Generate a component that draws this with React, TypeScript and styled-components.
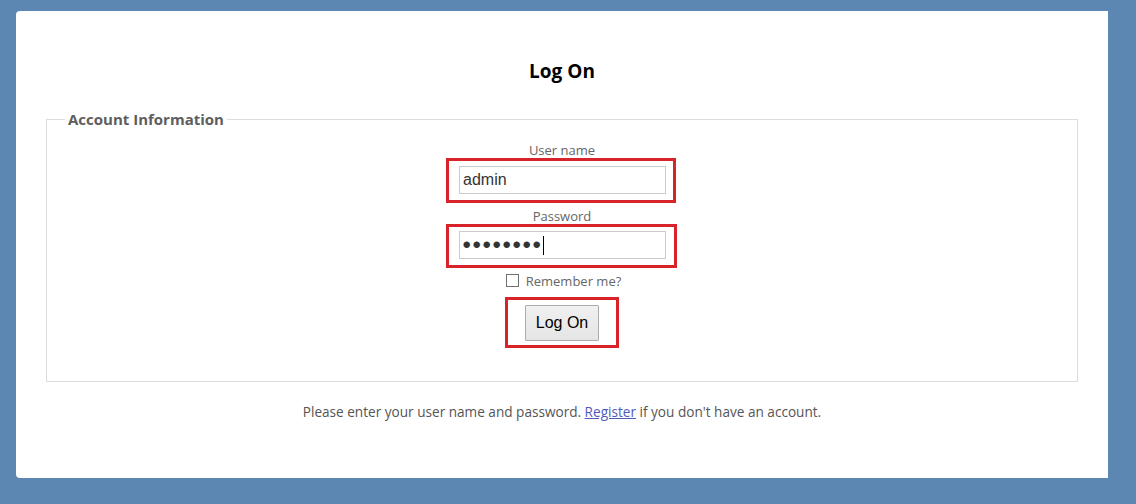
import React from 'react';
import styled, { createGlobalStyle } from 'styled-components';

const GlobalStyle = createGlobalStyle`
    html, body {
        margin: 0;
        padding: 0;
        background: #5c87b2;
    }
    body {
        font-family: "Open Sans", "Liberation Sans", sans-serif;
    }
`;

const Page = styled.div`
    box-sizing: border-box;
    width: 1092px;
    height: 467px;
    margin: 11px 0 0 16px;
    padding-top: 48px;
    background: #fff;
    border-radius: 4px 0 0 4px;
    display: flex;
    flex-direction: column;
    align-items: center;
`;

const Title = styled.h2`
    margin: 0 0 27px;
    font-size: 19px;
    line-height: 24px;
    font-weight: 700;
    color: #000;
`;

const Fieldset = styled.fieldset`
    box-sizing: border-box;
    width: 1032px;
    margin: 0;
    padding: 15px 18px 33px;
    border: 1px solid #dcdcdc;
    display: flex;
    flex-direction: column;
    align-items: center;
`;

const Legend = styled.legend`
    padding: 0 3px;
    font-size: 15px;
    line-height: 18px;
    font-weight: 700;
    color: #5e5e5e;
`;

const Label = styled.label<{ $top?: number }>`
    display: block;
    margin-top: ${(p) => p.$top ?? 0}px;
    margin-bottom: 1px;
    font-size: 13px;
    line-height: 14px;
    color: #666;
`;

// red annotation frames drawn around the fields
const Highlight = styled.div<{ $pad: string; $nudge?: number }>`
    display: flex;
    border: 3px solid #d8232a;
    padding: ${(p) => p.$pad};
    margin-right: ${(p) => p.$nudge ?? 0}px;
`;

const FieldWrap = styled.div`
    position: relative;
`;

const Input = styled.input<{ $secret?: boolean }>`
    box-sizing: border-box;
    width: 207px;
    height: 28px;
    margin: 0;
    padding: 0 3px;
    border: 1px solid #cbcbcb;
    outline: none;
    font-family: "Liberation Sans", Arial, sans-serif;
    font-size: ${(p) => (p.$secret ? '24px' : '16px')};
    letter-spacing: ${(p) => (p.$secret ? '1.6px' : 'normal')};
    color: #333;
    background: #fff;
`;

const Caret = styled.span`
    position: absolute;
    left: 84px;
    top: 5px;
    width: 1px;
    height: 19px;
    background: #000;
`;

const CheckRow = styled.div`
    display: flex;
    align-items: center;
    gap: 7px;
    margin: 5px 0 8px 3px;
    font-size: 13px;
    line-height: 16px;
    color: #666;
`;

const Check = styled.input`
    appearance: none;
    box-sizing: border-box;
    width: 13px;
    height: 13px;
    margin: 0 0 2px;
    border: 1px solid #707070;
    background: #fff;
`;

const Button = styled.button`
    box-sizing: border-box;
    width: 74px;
    height: 36px;
    margin: 0;
    padding: 0;
    border: 1px solid #adadad;
    border-radius: 1px;
    background: linear-gradient(#f0f0f0, #e5e5e5);
    font-family: "Liberation Sans", Arial, sans-serif;
    font-size: 16px;
    color: #000;
`;

const Footer = styled.p`
    margin: 21px 0 0;
    font-size: 13.6px;
    line-height: 18px;
    color: #555;
`;

const Link = styled.a`
    color: #505abc;
    text-decoration: underline;
`;

export default function App() {
    return (
        <>
            <GlobalStyle />
            <Page>
                <Title>Log On</Title>
                <Fieldset>
                    <Legend>Account Information</Legend>
                    <Label htmlFor="user">User name</Label>
                    <Highlight $pad="5px 7px 6px 10px" $nudge={2}>
                        <Input id="user" type="text" defaultValue="admin" readOnly />
                    </Highlight>
                    <Label htmlFor="pass" $top={6}>Password</Label>
                    <Highlight $pad="4px 8px 6px 10px" $nudge={2}>
                        <FieldWrap>
                            <Input id="pass" type="password" defaultValue="12345678" readOnly $secret />
                            <Caret />
                        </FieldWrap>
                    </Highlight>
                    <CheckRow>
                        <Check type="checkbox" id="remember" />
                        <label htmlFor="remember">Remember me?</label>
                    </CheckRow>
                    <Highlight $pad="5px 17px 4px">
                        <Button type="button">Log On</Button>
                    </Highlight>
                </Fieldset>
                <Footer>
                    Please enter your user name and password. <Link href="#">Register</Link> if you don't have an account.
                </Footer>
            </Page>
        </>
    );
}
